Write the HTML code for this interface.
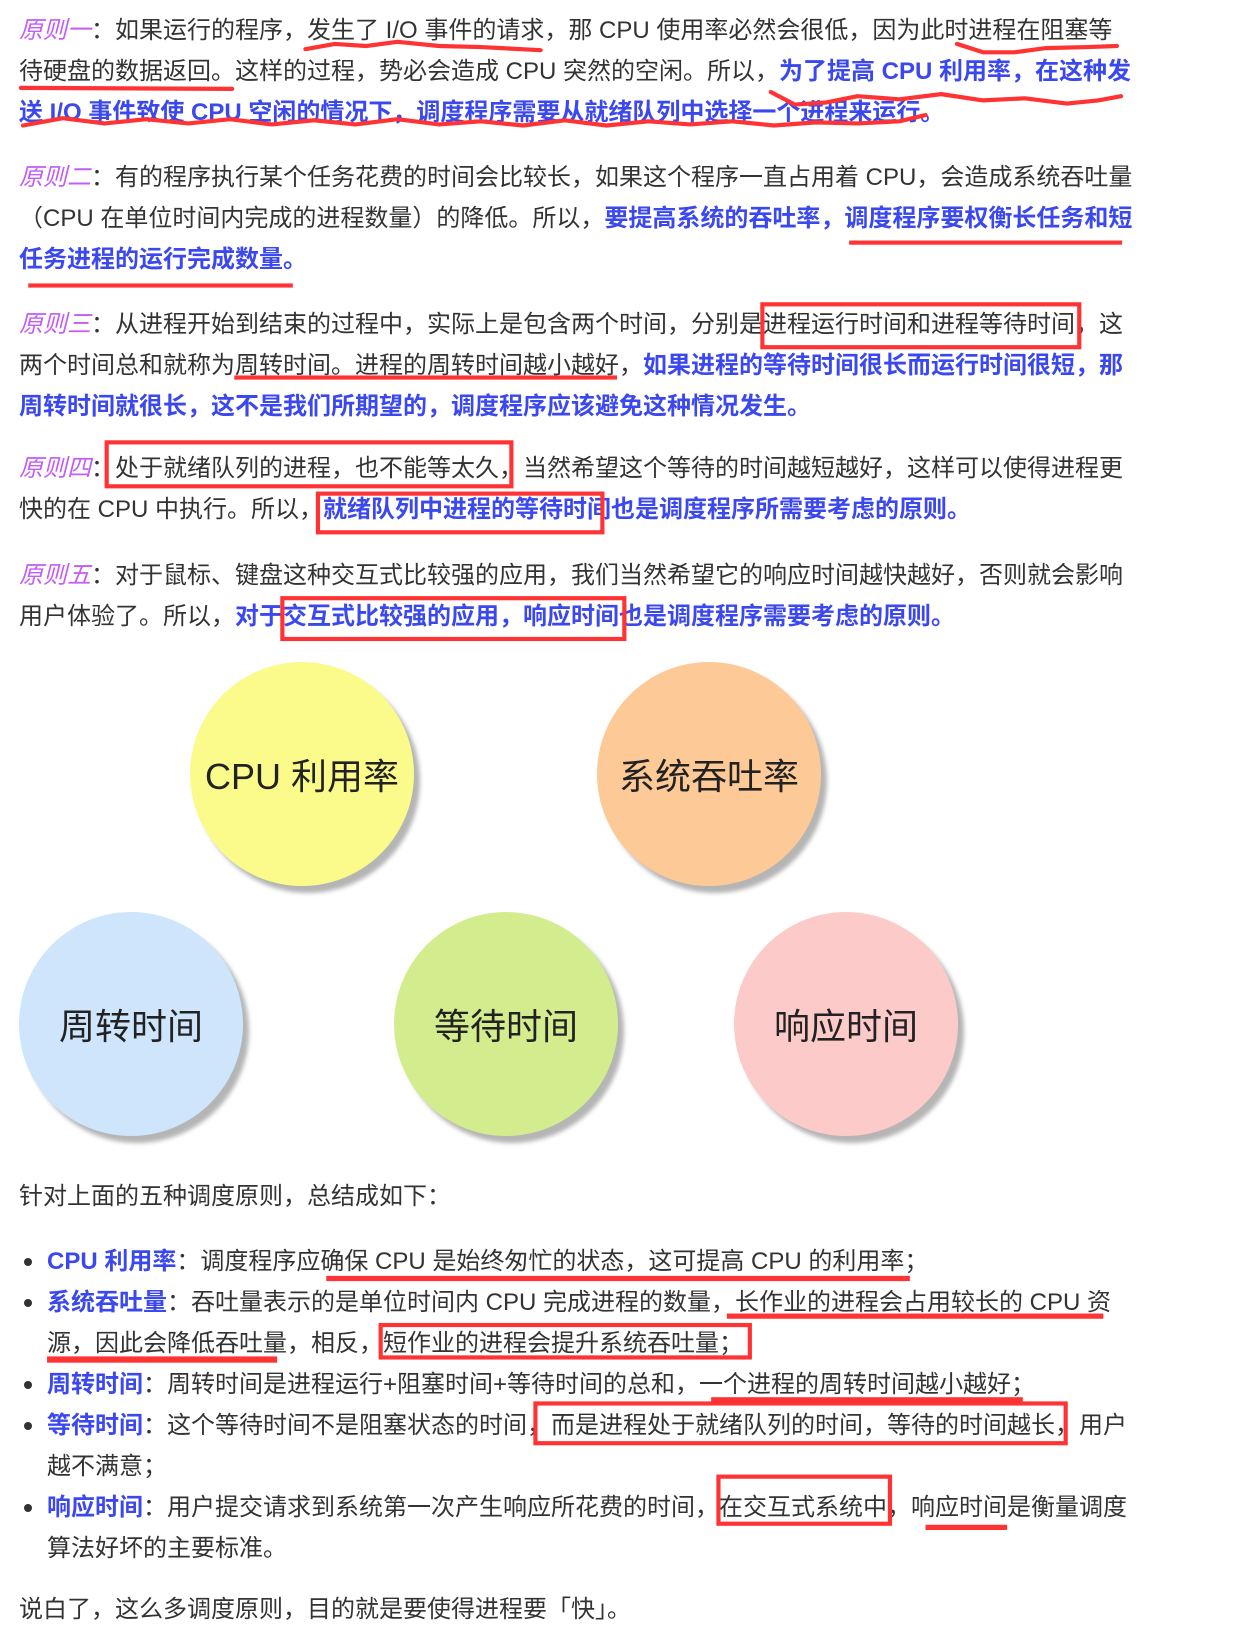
<!DOCTYPE html>
<html><head><meta charset="utf-8"><style>
html,body{margin:0;padding:0;background:#fff;}
body{width:1255px;height:1645px;position:relative;overflow:hidden;font-family:"Liberation Sans","Noto Sans CJK SC",sans-serif;font-size:24px;color:#333;}
.p{position:absolute;left:19px;width:1108px;line-height:41px;margin:0;}
.nw{white-space:nowrap;}
.pu{font-style:italic;color:#c45cf7;}
.b{font-weight:bold;color:#3b48f0;}
.c{position:absolute;width:224px;height:224px;border-radius:50%;box-shadow:6px 7px 4px #b5b5b5;display:flex;align-items:center;justify-content:center;font-size:36px;color:#222;}
.li{position:absolute;left:47px;width:1080px;line-height:41px;}
.dot{position:absolute;left:24px;width:8px;height:8px;border-radius:50%;background:#333;}
#mk{position:absolute;left:0;top:0;width:1200px;height:1572px;transform:scale(1.0458);transform-origin:0 0;}
#mk div{position:absolute;}
.bx{border:4px solid #f33;box-sizing:border-box;}
.ln{background:#f33;height:4px;}
</style></head><body>
<p class="p nw" style="top:10px"><span class="pu">原则一</span>：如果运行的程序，发生了 I/O 事件的请求，那 CPU 使用率必然会很低，因为此时进程在阻塞等<br>待硬盘的数据返回。这样的过程，势必会造成 CPU 突然的空闲。所以，<span class="b">为了提高 CPU 利用率，在这种发<br>送 I/O 事件致使 CPU 空闲的情况下，调度程序需要从就绪队列中选择一个进程来运行。</span></p>
<p class="p nw" style="top:157px"><span class="pu">原则二</span>：有的程序执行某个任务花费的时间会比较长，如果这个程序一直占用着 CPU，会造成系统吞吐量<br>（CPU 在单位时间内完成的进程数量）的降低。所以，<span class="b">要提高系统的吞吐率，调度程序要权衡长任务和短<br>任务进程的运行完成数量。</span></p>
<p class="p" style="top:304px"><span class="pu">原则三</span>：从进程开始到结束的过程中，实际上是包含两个时间，分别是进程运行时间和进程等待时间，这两个时间总和就称为周转时间。进程的周转时间越小越好，<span class="b">如果进程的等待时间很长而运行时间很短，那周转时间就很长，这不是我们所期望的，调度程序应该避免这种情况发生。</span></p>
<p class="p" style="top:448px"><span class="pu">原则四</span>：处于就绪队列的进程，也不能等太久，当然希望这个等待的时间越短越好，这样可以使得进程更快的在 CPU 中执行。所以，<span class="b">就绪队列中进程的等待时间也是调度程序所需要考虑的原则。</span></p>
<p class="p" style="top:555px"><span class="pu">原则五</span>：对于鼠标、键盘这种交互式比较强的应用，我们当然希望它的响应时间越快越好，否则就会影响用户体验了。所以，<span class="b">对于交互式比较强的应用，响应时间也是调度程序需要考虑的原则。</span></p>

<div class="c" style="left:190px;top:662px;background:#fbfb8c;">CPU 利用率</div>
<div class="c" style="left:597px;top:662px;background:#fcc997;">系统吞吐率</div>
<div class="c" style="left:19px;top:912px;background:#cfe5fc;">周转时间</div>
<div class="c" style="left:394px;top:912px;background:#d3ed8e;">等待时间</div>
<div class="c" style="left:734px;top:912px;background:#fdcaca;">响应时间</div>

<p class="p" style="top:1176px">针对上面的五种调度原则，总结成如下：</p>
<div class="dot" style="top:1258px"></div>
<div class="li" style="top:1241px"><span class="b">CPU 利用率</span>：调度程序应确保 CPU 是始终匆忙的状态，这可提高 CPU 的利用率；</div>
<div class="dot" style="top:1299px"></div>
<div class="li" style="top:1282px"><span class="b">系统吞吐量</span>：吞吐量表示的是单位时间内 CPU 完成进程的数量，长作业的进程会占用较长的 CPU 资源，因此会降低吞吐量，相反，短作业的进程会提升系统吞吐量；</div>
<div class="dot" style="top:1381px"></div>
<div class="li" style="top:1364px"><span class="b">周转时间</span>：周转时间是进程运行+阻塞时间+等待时间的总和，一个进程的周转时间越小越好；</div>
<div class="dot" style="top:1422px"></div>
<div class="li" style="top:1405px"><span class="b">等待时间</span>：这个等待时间不是阻塞状态的时间，而是进程处于就绪队列的时间，等待的时间越长，用户越不满意；</div>
<div class="dot" style="top:1504px"></div>
<div class="li" style="top:1487px"><span class="b">响应时间</span>：用户提交请求到系统第一次产生响应所花费的时间，在交互式系统中，响应时间是衡量调度算法好坏的主要标准。</div>
<p class="p" style="top:1589px">说白了，这么多调度原则，目的就是要使得进程要「快」。</p>

<div id="mk">
<svg width="1200" height="1572" style="position:absolute;left:0;top:0" fill="none" stroke="#f33" stroke-width="4" stroke-linecap="round" stroke-linejoin="round">
<polyline points="292,47 320,42 350,44 380,40 420,44 460,45 517,48"/>
<polyline points="915,42 940,50 970,50 1000,46 1040,45 1068,44"/>
<polyline points="20,84 222,85"/>
<polyline points="737,88 760,100 790,98 820,92 860,95 900,90 940,96 980,94 1020,99 1050,96 1072,92"/>
<polyline points="22,120 60,113 100,118 140,114 180,118 220,114 260,119 300,115 340,119 380,114 420,119 460,116 500,120 540,115 580,120 620,116 660,119 700,116 740,120 780,117 820,118 860,116 885,110"/>
</svg>
<div class="ln" style="left:812px;top:230px;width:261px"></div>
<div class="ln" style="left:27px;top:271px;width:253px"></div>
<div class="bx" style="left:727px;top:289px;width:307px;height:45px"></div>
<div class="ln" style="left:224px;top:359px;width:366px"></div>
<div class="bx" style="left:100px;top:421px;width:391px;height:46px"></div>
<div class="bx" style="left:302px;top:470px;width:276px;height:41px"></div>
<div class="bx" style="left:268px;top:570px;width:331px;height:43px"></div>
<div class="ln" style="left:312px;top:1220px;width:558px;height:5px"></div>
<div class="ln" style="left:695px;top:1256px;width:360px;height:5px"></div>
<div class="ln" style="left:45px;top:1297px;width:220px;height:6px"></div>
<div class="bx" style="left:362px;top:1265px;width:357px;height:35px"></div>
<div class="ln" style="left:680px;top:1336px;width:298px;height:5px"></div>
<div class="bx" style="left:510px;top:1340px;width:511px;height:42px"></div>
<div class="bx" style="left:685px;top:1410px;width:168px;height:49px"></div>
<div class="ln" style="left:885px;top:1458px;width:78px;height:5px"></div>
</div>
</body></html>
